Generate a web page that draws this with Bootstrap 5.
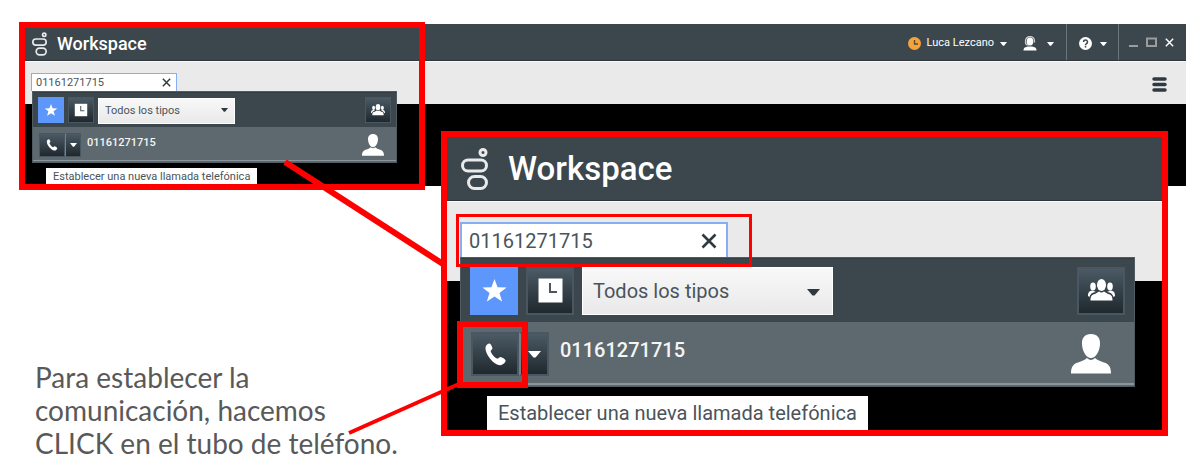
<!DOCTYPE html>
<html lang="es">
<head>
<meta charset="utf-8">
<meta name="viewport" content="width=device-width, initial-scale=1">
<title>Workspace - Establecer una llamada</title>
<link href="https://cdn.jsdelivr.net/npm/bootstrap@5.3.0/dist/css/bootstrap.min.css" rel="stylesheet">
<style>
  body { background: #fff; font-family: Roboto, "Liberation Sans", sans-serif; color: #4a545b; overflow-x: hidden; }
  button { border: 0; padding: 0; background: none; color: inherit; }
  svg { display: block; flex: none; }

  /* sizes of the application at normal scale */
  .ws { --bar: 37px; --bar-top: 3px; --tool: 43px; --fs: 11px; --title: 18px; --row: 35px; --key: 26px; --call: 24px; --line: 1px;
        --logo-w: 15px; --logo-h: 24px; --logo-gap: 10px; --pad-x: 12px; --find-top: 11px; --find-w: 146px; --find-h: 18px;
        --find-x: 4px; --clear: 9px; --icon: 14px; --gap: 4px; --inset: 5px; --menu-x: 1px; --menu-w: 365px; --select-w: 137px; --select-x: 6px;
        --arrow-w: 7px; --arrow-h: 4px; --drop-w: 16px; --num-x: 6px; --person: 22px; --person-x: 7px; --tip-x: 13px; --tip-h: 18px; --tip-gap: 6px; --tip-pad: 7px; --stage: 82px; }
  /* sizes of the enlarged detail */
  .ws-zoom { --bar: 64px; --bar-top: 0px; --tool: 80px; --fs: 20px; --title: 33px; --row: 64px; --key: 48px; --call: 44px; --line: 2px;
        --logo-w: 27px; --logo-h: 42px; --logo-gap: 20px; --pad-x: 14px; --find-top: 20px; --find-w: 268px; --find-h: 35px;
        --find-x: 7px; --clear: 16px; --icon: 27px; --gap: 8px; --inset: 9px; --menu-x: 0px; --menu-w: 675px; --select-w: 251px; --select-x: 10px;
        --arrow-w: 13px; --arrow-h: 7px; --drop-w: 30px; --num-x: 11px; --person: 40px; --person-x: 14px; --tip-x: 26px; --tip-h: 34px; --tip-gap: 10px; --tip-pad: 11px; --stage: 149px; }

  .ws-bar { height: var(--bar); background: #3c474d; color: #fff; border-bottom: 1px solid #2d373c; padding-left: var(--pad-x); }
  .ws-brand { gap: var(--logo-gap); padding-top: var(--bar-top); font-size: var(--title); line-height: 1; font-weight: 500; }
  .ws-logo { width: var(--logo-w); height: var(--logo-h); color: #e8eaeb; }
  .ws-tools { height: var(--tool); background: #eaeaea; border-top: 1px solid #fafafa; padding: var(--find-top) 19px 0 calc(var(--pad-x) - 1px); }
  .ws-stage { height: var(--stage); background: #000; }

  .ws-find { width: var(--find-w); }
  .ws-field { height: var(--find-h); border: var(--line) solid #87aef2; border-bottom: 0; background: #fff; padding-right: 5px; }
  .ws-zoom .ws-field { padding-right: 9px; }
  .ws-field input { min-width: 0; flex: 1; border: 0; outline: 0; padding: 0 0 0 var(--find-x); font-size: var(--fs); line-height: 1; color: #4a545b; background: none; height: 100%; }
  .ws-clear { width: var(--clear); height: var(--clear); color: #2f3a40; }
  .ws-menu { position: absolute; top: 100%; left: var(--menu-x); width: var(--menu-w); z-index: 2; background: #3c474d; border: 1px solid #4f5c64; }
  .ws-menu .r1 { height: var(--row); padding: 0 var(--inset); gap: var(--gap); border-top: 1px solid #333e44; }
  .ws-menu .r2 { height: var(--row); padding: 0 var(--inset) 0 calc(var(--inset) + 1px); background: #5e696f; }
  .ws-menu .r2::after { content: ""; position: absolute; left: 0; right: 0; bottom: 1px; height: var(--line); background: #89949b; }
  .key { width: var(--key); height: var(--key); color: #fff; flex: none; }
  .r2 .key { height: var(--call); }
  .key-dark { background: linear-gradient(#4b5a65, #1f282d); border: var(--line) solid #485761; }
  .key-blue { background: #5e97fb; }
  .key svg { width: var(--icon); height: var(--icon); }
  .key.key-drop { width: var(--drop-w); border-left-color: #76828a; }
  .svg-arrow, .key .svg-arrow { width: var(--arrow-w); height: var(--arrow-h); }
  .ws-kind { width: var(--select-w); height: var(--key); }
  .ws-kind select { width: 100%; height: 100%; appearance: none; border: 1px solid #fff; border-radius: 0; background: linear-gradient(#f8f8f8, #e9e9e9); color: #4a545b; font-size: var(--fs); padding: 0 0 0 var(--select-x); }
  .ws-kind .svg-arrow { position: absolute; right: var(--arrow-w); top: 50%; margin-top: -2px; color: #2f3a40; pointer-events: none; }
  .ws-number { margin-left: var(--num-x); font-size: var(--fs); line-height: 1; color: #f4f5f5; font-weight: 500; padding-bottom: var(--inset); }
  .ws-person { width: var(--person); height: var(--person); color: #fff; margin-right: var(--person-x); }
  .ws-tip { position: absolute; left: var(--tip-x); top: 100%; margin-top: var(--tip-gap); height: var(--tip-h); padding: 0 var(--tip-pad); background: #fff; font-size: var(--fs); line-height: var(--tip-h); white-space: nowrap; color: #4a545b; }

  .ws-status { padding-top: var(--bar-top); }
  .ws-user { font-size: 11px; gap: 6px; margin-right: 14px; }
  .ws-cell { border-left: 1px solid #6b757b; }
  .ws-cell-help { width: 52px; }
  .ws-cell-win { width: 68px; padding: 0 12px 0 10px; }

  .main-window { margin: 24px 14px 0 20px; }
  .mark-box { position: absolute; border: 6px solid #f00; z-index: 4; pointer-events: none; }
  .mark-window { left: -1px; top: -2px; width: 406px; height: 168px; }
  .mark-find { border-width: 3px; left: -4px; top: -8px; width: 296px; height: 53px; }
  .mark-phone { left: -14px; top: -11px; width: 71px; height: 67px; }

  .detail-row { margin-top: -55px; }
  .note { width: 441px; flex: none; padding: 230px 0 8px 35px; font-family: Lato, "Open Sans", sans-serif; font-size: 28px; line-height: 33px; color: #595959; }
  .detail { border: 6px solid #f00; margin-right: 32px; z-index: 3; }
  .leads { position: absolute; right: 100%; top: -6px; width: 180px; height: 310px; overflow: visible; z-index: 5; pointer-events: none; }
</style>
</head>
<body>
<svg width="0" height="0" class="position-absolute" aria-hidden="true">
  <symbol id="logo" viewBox="0 0 27 42"><g fill="none" stroke="currentColor" stroke-width="3"><rect x="1.5" y="12" width="24" height="11" rx="5.5"/><rect x="7.5" y="28.500" width="18" height="12" rx="6"/><circle cx="22" cy="4.500" r="3"/></g></symbol>
  <symbol id="x" viewBox="0 0 16 16"><path d="M1.500 1.500l13 13M14.500 1.500l-13 13" stroke="currentColor" stroke-width="2.600"/></symbol>
  <symbol id="star" viewBox="0 0 27 27"><path fill="currentColor" d="M13.500 2l3.100 8.300 9 .3-7.100 5.400 2.600 8.600-7.600-5-7.600 5 2.600-8.600-7.100-5.400 9-.3z"/></symbol>
  <symbol id="clock" viewBox="0 0 27 27"><path fill="currentColor" d="M1.500 1.500h24v24h-24z"/><path d="M13 6v9h7" fill="none" stroke="#4b565d" stroke-width="2"/></symbol>
  <symbol id="arrow" viewBox="0 0 12 7" preserveAspectRatio="none"><path fill="currentColor" d="M0 0h12L7 6.500H5z"/></symbol>
  <symbol id="people" viewBox="0 0 27 27"><g fill="currentColor"><ellipse cx="13.500" cy="8" rx="4.500" ry="6"/><ellipse cx="5" cy="9.500" rx="2.800" ry="4"/><ellipse cx="22" cy="9.500" rx="2.800" ry="4"/><path d="M2.500 23.500c0-4 1-6 4.500-6.500l4-2.500q2.500 2 5 0l4 2.500c3.500.5 4.500 2.500 4.500 6.500zM0 19c0-3.500 1-5 4.500-5.500L8 15c-4 .5-5.500 2-6.500 5zM27 19c0-3.500-1-5-4.500-5.500L19 15c4 .5 5.500 2 6.500 5z"/></g></symbol>
  <symbol id="phone" viewBox="0 0 27 27"><path transform="translate(3 2)" fill="currentColor" d="M.6 4C1.200 1.800 3 .4 4.500.5c1.200.1 3 3.600 2.900 4.900-.1 1.100-1.900 1.700-1.700 2.800.5 2.500 4.100 6.700 6.600 7.400 1.100.3 2-1.600 3.200-1.500 1.300.1 5 2.200 5.100 3.500.1 1.900-2.700 4.500-5.200 4.600C9 22.500-.7 10.500.6 4z"/></symbol>
  <symbol id="person" viewBox="0 0 40 40"><path fill="currentColor" d="M20 0c6 0 9.500 4 9 10.500C28.500 18 24.500 24 20 24s-8.500-6-9-13.500C10.500 4 14 0 20 0zM0 39.500c0-7 2.500-9.500 7-11 4-1.300 6.500-2.300 9-4.500q4 4 8 0c2.500 2.200 5 3.200 9 4.500 4.500 1.500 7 4 7 11z"/></symbol>
</svg>

<main>
  <section class="main-window ws position-relative">
    <header class="ws-bar d-flex align-items-stretch justify-content-between">
      <div class="ws-brand d-flex align-items-center"><svg class="ws-logo"><use href="#logo"/></svg><span>Workspace</span></div>
      <div class="d-flex">
        <button type="button" class="ws-user ws-status d-flex align-items-center">
          <svg width="13" height="13" viewBox="0 0 13 13"><circle cx="6.500" cy="6.500" r="6.500" fill="#f6a33a"/><path d="M6.500 3v4H10" fill="none" stroke="#55483a" stroke-width="1.300"/></svg>
          <span>Luca Lezcano</span><svg class="svg-arrow"><use href="#arrow"/></svg>
        </button>
        <button type="button" class="ws-status d-flex align-items-center gap-2 me-2 pe-1" aria-label="Medios">
          <svg width="18" height="15" viewBox="0 0 18 15"><ellipse cx="9" cy="5.500" rx="3.300" ry="4" fill="#fff"/><path d="M4.500 6.500V5a4.500 4.500 0 0 1 9 0v1.500M4.500 6.500q0 2.500 3 2.500" fill="none" stroke="#c9cdd0" stroke-width="1.300"/><path d="M2.500 14.500c0-3 2-3.500 4.500-4h4c2.500.5 4.500 1 4.500 4z" fill="#fff"/></svg>
          <svg class="svg-arrow"><use href="#arrow"/></svg>
        </button>
        <div class="ws-cell ws-cell-help ws-status d-flex align-items-center justify-content-center">
          <button type="button" class="d-flex align-items-center gap-2" aria-label="Ayuda">
            <svg width="13" height="13" viewBox="0 0 13 13"><circle cx="6.500" cy="6.500" r="6.500" fill="#fff"/><path d="M4.500 5a2 2 0 1 1 2.800 1.800q-.8.400-.8 1.400M6.500 9v1.500" fill="none" stroke="#3c474d" stroke-width="1.500"/></svg>
            <svg class="svg-arrow"><use href="#arrow"/></svg>
          </button>
        </div>
        <div class="ws-cell ws-cell-win ws-status d-flex align-items-center justify-content-between">
          <button type="button" aria-label="Minimizar"><svg width="9" height="10" viewBox="0 0 9 10"><path d="M0 9h9" stroke="#9b9c9c" stroke-width="2"/></svg></button>
          <button type="button" aria-label="Maximizar"><svg width="11" height="10" viewBox="0 0 11 10"><path d="M1 1.500h9v7.500H1z" fill="none" stroke="#9b9c9c" stroke-width="2"/></svg></button>
          <button type="button" aria-label="Cerrar"><svg width="9" height="9"><use href="#x"/></svg></button>
        </div>
      </div>
    </header>
    <div class="ws-tools d-flex justify-content-between align-items-start">
      <div class="ws-find position-relative">
        <div class="ws-field d-flex align-items-center"><input type="text" value="01161271715" aria-label="Buscar"><button type="button" aria-label="Borrar"><svg class="ws-clear"><use href="#x"/></svg></button></div>
        <div class="ws-menu">
          <div class="r1 d-flex align-items-center">
            <button type="button" class="key key-blue d-flex align-items-center justify-content-center" aria-label="Favoritos"><svg><use href="#star"/></svg></button>
            <button type="button" class="key key-dark d-flex align-items-center justify-content-center" aria-label="Recientes"><svg><use href="#clock"/></svg></button>
            <div class="ws-kind position-relative"><select aria-label="Tipo de contacto"><option>Todos los tipos</option></select><svg class="svg-arrow"><use href="#arrow"/></svg></div>
            <button type="button" class="key key-dark d-flex align-items-center justify-content-center ms-auto" aria-label="Agrupar"><svg><use href="#people"/></svg></button>
          </div>
          <div class="r2 d-flex align-items-center">
            <button type="button" class="key key-dark d-flex align-items-center justify-content-center" aria-label="Llamar"><svg><use href="#phone"/></svg></button>
            <button type="button" class="key key-drop key-dark d-flex align-items-center justify-content-center" aria-label="Más acciones"><svg class="svg-arrow"><use href="#arrow"/></svg></button>
            <span class="ws-number">01161271715</span>
            <svg class="ws-person ms-auto"><use href="#person"/></svg>
          </div>
          <div class="ws-tip" role="tooltip">Establecer una nueva llamada telefónica</div>
        </div>
      </div>
      <button type="button" aria-label="Menú" class="pt-1"><svg width="15" height="16" viewBox="0 0 15 16"><path d="M2 2h11M2 7.500h11M2 13h11" stroke="#2f3a40" stroke-width="3.500" stroke-linecap="round"/></svg></button>
    </div>
    <div class="ws-stage"></div>
    <div class="mark-box mark-window"></div>
  </section>

  <div class="detail-row d-flex align-items-start">
    <p class="note mb-0">Para establecer la<br>comunicación, hacemos<br>CLICK en el tubo de teléfono.</p>
    <section class="detail ws ws-zoom position-relative flex-grow-1">
      <header class="ws-bar d-flex">
        <div class="ws-brand d-flex align-items-center"><svg class="ws-logo"><use href="#logo"/></svg><span>Workspace</span></div>
      </header>
      <div class="ws-tools">
        <div class="ws-find position-relative">
          <div class="ws-field d-flex align-items-center"><input type="text" value="01161271715" aria-label="Buscar, ampliado"><button type="button" aria-label="Borrar"><svg class="ws-clear"><use href="#x"/></svg></button></div>
          <div class="ws-menu">
            <div class="r1 d-flex align-items-center">
              <button type="button" class="key key-blue d-flex align-items-center justify-content-center" aria-label="Favoritos"><svg><use href="#star"/></svg></button>
              <button type="button" class="key key-dark d-flex align-items-center justify-content-center" aria-label="Recientes"><svg><use href="#clock"/></svg></button>
              <div class="ws-kind position-relative"><select aria-label="Tipo de contacto, ampliado"><option>Todos los tipos</option></select><svg class="svg-arrow"><use href="#arrow"/></svg></div>
              <button type="button" class="key key-dark d-flex align-items-center justify-content-center ms-auto" aria-label="Agrupar"><svg><use href="#people"/></svg></button>
            </div>
            <div class="r2 d-flex align-items-center">
              <div class="position-relative">
                <button type="button" class="key key-dark d-flex align-items-center justify-content-center" aria-label="Llamar"><svg><use href="#phone"/></svg></button>
                <div class="mark-box mark-phone"></div>
              </div>
              <button type="button" class="key key-drop key-dark d-flex align-items-center justify-content-center" aria-label="Más acciones"><svg class="svg-arrow"><use href="#arrow"/></svg></button>
              <span class="ws-number">01161271715</span>
              <svg class="ws-person ms-auto"><use href="#person"/></svg>
            </div>
            <div class="ws-tip" role="tooltip">Establecer una nueva llamada telefónica</div>
          </div>
          <div class="mark-box mark-find"></div>
        </div>
      </div>
      <div class="ws-stage"></div>
      <svg class="leads" viewBox="0 0 180 310" aria-hidden="true"><path d="M18 31L176 133" stroke="#f00" stroke-width="6"/><path d="M82 302L192 253" stroke="#f00" stroke-width="4"/></svg>
    </section>
  </div>
</main>
<script src="https://cdn.jsdelivr.net/npm/bootstrap@5.3.0/dist/js/bootstrap.bundle.min.js"></script>
</body>
</html>
